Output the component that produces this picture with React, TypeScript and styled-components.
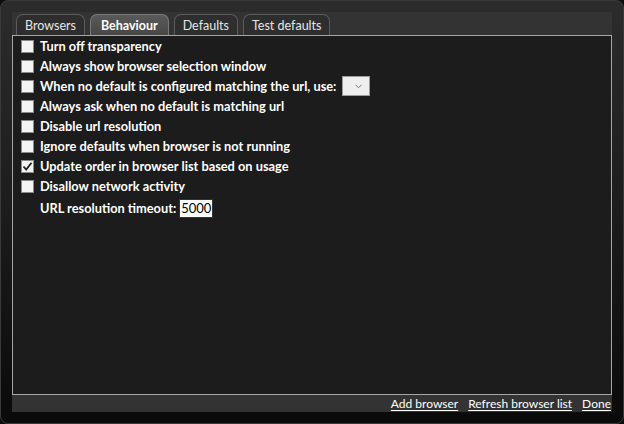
import React from "react";
import styled, { createGlobalStyle } from "styled-components";

const Global = createGlobalStyle`
  html, body { margin: 0; padding: 0; background: #0c0c0c; }
  body { font-family: "Lato", "Open Sans", sans-serif; }
`;

const Window = styled.div`
  box-sizing: border-box;
  width: 624px;
  height: 424px;
  padding: 12px;
  border: 1px solid #3a3a3a;
  border-radius: 8px;
  background: linear-gradient(180deg, #2c2c2c 0%, #1c1c1c 50%, #0a0a0a 100%);
  display: flex;
`;

const Panel = styled.div`
  flex: 1;
  margin: -1px;
  background: #333333;
  display: flex;
  flex-direction: column;
  padding-top: 2px;
`;

const TabBar = styled.div`
  display: flex;
  gap: 5px;
  padding-left: 4px;
  height: 21px;
`;

const Tab = styled.div<{ $active?: boolean }>`
  box-sizing: border-box;
  height: 21px;
  padding: 0 ${(p) => (p.$active ? 10 : 8)}px;
  display: flex;
  align-items: center;
  border: 1px solid ${(p) => (p.$active ? "#7a7a7a" : "#5c5c5c")};
  border-bottom: none;
  border-radius: 7px 7px 0 0;
  background: ${(p) =>
    p.$active ? "linear-gradient(180deg, #5a5a5a, #474747)" : "#2e2e2e"};
  color: ${(p) => (p.$active ? "#ffffff" : "#e6e6e6")};
  font-weight: ${(p) => (p.$active ? 700 : 400)};
  font-size: 12.5px;
`;

const Content = styled.div`
  flex: 1;
  border: 1px solid #a6a6a6;
  background: #1c1c1c;
  padding: 0 0 0 8px;
  display: flex;
  flex-direction: column;
`;

const Row = styled.div`
  height: 20px;
  display: flex;
  align-items: center;
  gap: 6px;
  color: #ffffff;
  font-weight: 700;
  font-size: 12.8px;
  white-space: nowrap;
`;

const Box = styled.div`
  box-sizing: border-box;
  width: 13px;
  height: 13px;
  background: #f4f4f4;
  border: 1px solid #8a8a8a;
  display: flex;
  align-items: center;
  justify-content: center;
`;

const Select = styled.div`
  box-sizing: border-box;
  width: 28px;
  height: 20px;
  background: #eeeeee;
  border: 1px solid #9a9a9a;
  display: flex;
  align-items: center;
  justify-content: flex-end;
  padding-right: 7px;
`;

const TimeoutRow = styled(Row)`
  height: 24px;
  padding-left: 19px;
  gap: 3px;
`;

const NumberBox = styled.div`
  box-sizing: border-box;
  height: 19px;
  padding: 0 1px;
  background: #ffffff;
  border: 1px solid #333;
  color: #000;
  font-weight: 400;
  font-size: 13px;
  display: flex;
  align-items: center;
`;

const Footer = styled.div`
  height: 17px;
  display: flex;
  justify-content: flex-end;
  align-items: center;
  gap: 10px;
  padding-right: 1px;
`;

const Link = styled.span`
  color: #ffffff;
  font-size: 12px;
  text-decoration: underline;
  text-underline-offset: 2px;
`;

const Check = () => (
  <svg width="11" height="11" viewBox="0 0 11 11">
    <path d="M1.5 5.5 L4.2 8.5 L9.5 1.8" fill="none" stroke="#222" strokeWidth="1.8" />
  </svg>
);

const Chevron = () => (
  <svg width="7" height="5" viewBox="0 0 7 5">
    <path d="M0.5 0.8 L3.5 3.8 L6.5 0.8" fill="none" stroke="#777" strokeWidth="1" />
  </svg>
);

const options: { label: string; checked?: boolean; select?: boolean }[] = [
  { label: "Turn off transparency" },
  { label: "Always show browser selection window" },
  { label: "When no default is configured matching the url, use:", select: true },
  { label: "Always ask when no default is matching url" },
  { label: "Disable url resolution" },
  { label: "Ignore defaults when browser is not running" },
  { label: "Update order in browser list based on usage", checked: true },
  { label: "Disallow network activity" },
];

export default function App() {
  return (
    <>
      <Global />
      <Window>
        <Panel>
          <TabBar>
            <Tab>Browsers</Tab>
            <Tab $active>Behaviour</Tab>
            <Tab>Defaults</Tab>
            <Tab>Test defaults</Tab>
          </TabBar>
          <Content>
            {options.map((o) => (
              <Row key={o.label}>
                <Box>{o.checked && <Check />}</Box>
                <span>{o.label}</span>
                {o.select && (
                  <Select>
                    <Chevron />
                  </Select>
                )}
              </Row>
            ))}
            <TimeoutRow>
              <span>URL resolution timeout:</span>
              <NumberBox>5000</NumberBox>
            </TimeoutRow>
          </Content>
          <Footer>
            <Link>Add browser</Link>
            <Link>Refresh browser list</Link>
            <Link>Done</Link>
          </Footer>
        </Panel>
      </Window>
    </>
  );
}
